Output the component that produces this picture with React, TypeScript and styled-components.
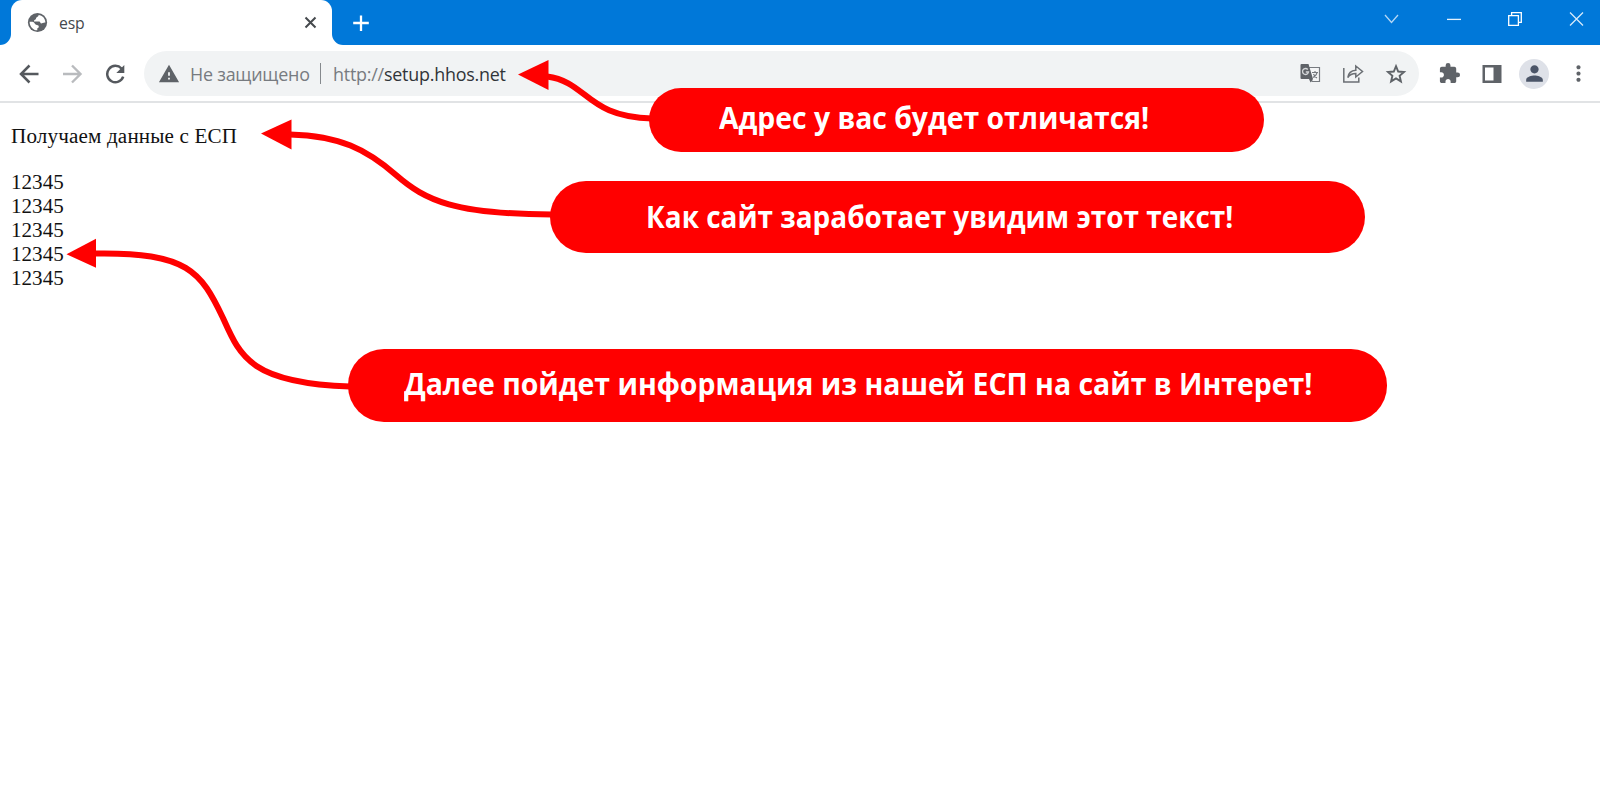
import React from 'react';
import styled, { createGlobalStyle } from 'styled-components';
import { MdExtension, MdMoreVert, MdPerson, MdWarning } from 'react-icons/md';

const GlobalStyle = createGlobalStyle`
  * { box-sizing: border-box; }
  body { margin: 0; background: #fff; overflow: hidden; }
  svg { display: block; flex: none; }
`;

const Window = styled.div`
  position: relative;
  width: 1600px;
  height: 800px;
  display: flex;
  flex-direction: column;
  background: #fff;
  font-family: 'Open Sans', 'Noto Sans', sans-serif;
`;

const TabStrip = styled.header`
  display: flex;
  height: 45px;
  background: #0078d9;
  color: #fff;
`;

const StripEdge = styled.div`
  width: 11px;
  background: #fff;
  &::before {
    content: '';
    display: block;
    height: 45px;
    background: #0078d9;
    border-bottom-right-radius: 11px;
  }
`;

const Tab = styled.div`
  display: flex;
  align-items: center;
  width: 321px;
  padding: 0 15px 0 16px;
  background: #fff;
  border-radius: 11px 11px 0 0;
  color: #45494d;
`;

const TabTitle = styled.span`
  flex: 1;
  margin-left: 11px;
  font-size: 15.8px;
  line-height: 20px;
  letter-spacing: -0.2px;
`;

const StripRest = styled.div`
  flex: 1;
  display: flex;
  background: #fff;
`;

const StripFill = styled.div`
  flex: 1;
  display: flex;
  justify-content: space-between;
  padding: 0 16px 0 21px;
  background: #0078d9;
  border-bottom-left-radius: 11px;
`;

const NewTab = styled.div`
  padding-top: 15px;
`;

const WindowButtons = styled.div`
  display: flex;
  gap: 47px;
  padding-top: 12px;
`;

const Toolbar = styled.nav`
  display: flex;
  align-items: center;
  height: 58px;
  padding: 1px 9px 0 19px;
  border-bottom: 2px solid #e1e3e5;
  color: #5f6368;
`;

const NavButtons = styled.div`
  display: flex;
  gap: 22px;
  width: 125px;
`;

const AddressBar = styled.div`
  display: flex;
  align-items: center;
  width: 1275px;
  height: 45px;
  padding: 0 12px 0 14px;
  border-radius: 23px;
  background: #f1f3f4;
  font-size: 17.9px;
  letter-spacing: -0.22px;
`;

const Security = styled.span<{ $width: number }>`
  width: ${(p) => p.$width}px;
  margin-left: 10px;
  color: #777b80;
  white-space: nowrap;
`;

const Divider = styled.i`
  width: 1px;
  height: 21px;
  margin-right: 12px;
  background: #85898d;
`;

const Url = styled.span`
  flex: 1;
  color: #303438;
`;

const Scheme = styled.span`
  color: #777b80;
`;

const AddressActions = styled.div`
  display: flex;
  align-items: center;
  gap: 21px;
`;

const ToolbarActions = styled.div`
  display: flex;
  align-items: center;
  flex: 1;
  justify-content: flex-end;
  gap: 17px;
`;

const Avatar = styled.div`
  display: flex;
  align-items: center;
  justify-content: center;
  width: 30px;
  height: 30px;
  border-radius: 50%;
  background: #dee1e8;
  color: #4b5568;
`;

const Extensions = styled.div`
  margin-right: 4px;
`;

const Page = styled.main`
  padding: 21px 11px;
  font-family: 'Liberation Serif', serif;
  font-size: 21.1px;
  line-height: 24px;
  color: #111;
`;

const Heading = styled.p`
  margin: 0 0 22px;
  letter-spacing: 0.16px;
`;

const Reading = styled.div``;

const Arrows = styled.svg`
  position: absolute;
  inset: 0;
  pointer-events: none;
`;

const Callout = styled.div<{ $x: number; $y: number; $w: number; $h: number; $indent: number }>`
  position: absolute;
  left: ${(p) => p.$x}px;
  top: ${(p) => p.$y}px;
  width: ${(p) => p.$w}px;
  height: ${(p) => p.$h}px;
  padding-left: ${(p) => p.$indent}px;
  border-radius: 36px;
  background: #f00;
  color: #fff;
`;

const CalloutText = styled.span<{ $drop: number; $stretch: number }>`
  display: inline-block;
  margin-top: ${(p) => p.$drop}px;
  font: 700 30px/40px 'Open Sans', sans-serif;
  white-space: nowrap;
  transform: scaleX(${(p) => p.$stretch});
  transform-origin: left;
`;

const readings = ['12345', '12345', '12345', '12345', '12345'];

const callouts = [
  { x: 649, y: 88, w: 615, h: 64, indent: 70, drop: 10, stretch: 0.944, text: 'Адрес у вас будет отличатся!' },
  { x: 550, y: 181, w: 815, h: 72, indent: 96, drop: 16, stretch: 0.931, text: 'Как сайт заработает увидим этот текст!' },
  { x: 348, y: 349, w: 1039, h: 73, indent: 56, drop: 15, stretch: 0.947, text: 'Далее пойдет информация из нашей ЕСП на сайт в Интерет!' },
];

const Globe = () => (
  <svg width="21" height="21" viewBox="0 0 21 21">
    <circle cx="10.5" cy="10.5" r="9.6" fill="#5f6368" />
    <path
      d="M11.5 3C12 4.5 9 5 9 6.600S7 7.500 7 9.500H11.500C13 9.500 13.300 10 13.600 11.300C15 11.800 16 10.300 18.400 10.500C18.300 6.500 15.500 3.300 11.500 3z"
      fill="#fff"
    />
    <path
      d="M2.600 9.700C2.600 14.500 6 18.200 10.300 18.300V16.300C11.800 16 12 15 11.600 13.800C10.600 12.800 9.300 13.300 8.300 12.300C7.600 11.200 7 9.700 5.300 9.700z"
      fill="#fff"
    />
  </svg>
);

const App = () => (
  <>
    <GlobalStyle />
    <Window>
      <TabStrip>
        <StripEdge />
        <Tab>
          <Globe />
          <TabTitle>esp</TabTitle>
          <svg width="13" height="13" viewBox="0 0 13 13" stroke="#45494d" strokeWidth="2">
            <path d="M1.500 1.500l10 10M11.500 1.500l-10 10" />
          </svg>
        </Tab>
        <StripRest>
          <StripFill>
            <NewTab>
              <svg width="17" height="17" viewBox="0 0 17 17" stroke="#fff" strokeWidth="2.300">
                <path d="M8 .5v15.500M.2 8h15.600" />
              </svg>
            </NewTab>
            <WindowButtons>
              <svg width="16" height="14" viewBox="0 0 16 14" fill="none" stroke="#b4d7f5" strokeWidth="1.300">
                <path d="M1 3l6.500 7.500L14 3" />
              </svg>
              <svg width="14" height="14" viewBox="0 0 14 14" stroke="#e4f1fc" strokeWidth="1.300">
                <path d="M0 7.400h14" />
              </svg>
              <svg width="14" height="14" viewBox="0 0 14 14" fill="none" stroke="#fff" strokeWidth="1.300">
                <path d="M.7 3.600h9.700v9.700H.7zM3.600 3.600V.7h9.700v9.700h-2.900" />
              </svg>
              <svg width="15" height="14" viewBox="0 0 15 14" stroke="#d5e9fa" strokeWidth="1.300">
                <path d="M1 .5l13 13M14 .5l-13 13" />
              </svg>
            </WindowButtons>
          </StripFill>
        </StripRest>
      </TabStrip>

      <Toolbar>
        <NavButtons>
          <svg width="21" height="20" viewBox="0 0 21 20" fill="none" stroke="#55595e" strokeWidth="2.500">
            <path d="M19.500 10H2.500M10.500 1.500L2 10l8.500 8.500" />
          </svg>
          <svg width="21" height="20" viewBox="0 0 21 20" fill="none" stroke="#b9bbbe" strokeWidth="2.400">
            <path d="M1 10h17M10 1.500L18.500 10l-8.500 8.500" />
          </svg>
          <svg width="21" height="20" viewBox="0 0 21 20">
            <path d="M16.500 4.500a8.200 8.200 0 1 0 1.700 8.200" fill="none" stroke="#55595e" strokeWidth="2.500" />
            <path d="M19.300 1v8h-8z" fill="#55595e" />
          </svg>
        </NavButtons>
        <AddressBar>
          <MdWarning size={22} />
          <Security $width={130}>Не защищено</Security>
          <Divider />
          <Url>
            <Scheme>http://</Scheme>setup.hhos.net
          </Url>
          <AddressActions>
            <svg width="21" height="21" viewBox="0 0 21 21">
              <path d="M8 4.500h11.500v14H12z" fill="#f5f6f7" stroke="#777b80" strokeWidth="1.200" />
              <path d="M1.500 1h7L13 16H1.500A1 1 0 0 1 .5 15V2a1 1 0 0 1 1-1z" fill="#5f6368" />
              <path d="M9 16h4l-2.500 3.500z" fill="#5f6368" />
              <path d="M7.800 6.500A3 3 0 1 0 8.500 9H5.800" fill="none" stroke="#d6d8da" strokeWidth="1.300" />
              <path d="M12 9.500h6M15 8v1.500M17 9.500c-.5 2.500-2 4-4 5M13.500 11c.8 1.800 2 3 3.500 4" fill="none" stroke="#777b80" strokeWidth="1.200" />
            </svg>
            <svg width="22" height="21" viewBox="0 0 22 21" fill="none" stroke="#6b6f74" strokeWidth="1.500">
              <path d="M1.800 5v14h15v-4.500M5.800 14.500c.6-4.800 3.500-7 8-7.300V3l6.700 5.500-6.700 5.500v-3.500c-3.800 0-6.100 1.100-8 4z" />
            </svg>
            <svg width="22" height="22" viewBox="0 0 22 22" fill="none" stroke="#5f6368" strokeWidth="1.900">
              <path d="M11 3.200l2.200 5.300 5.800.5-4.400 3.800 1.300 5.600-4.900-3-4.900 3 1.300-5.600L3 9l5.800-.5z" />
            </svg>
          </AddressActions>
        </AddressBar>
        <ToolbarActions>
          <Extensions>
            <MdExtension size={23} />
          </Extensions>
          <svg width="20" height="20" viewBox="0 0 20 20">
            <path d="M.5 1h19v18H.5zM3 3.500v13h8.500v-13z" fill="#5f6368" fillRule="evenodd" />
          </svg>
          <Avatar>
            <MdPerson size={25} />
          </Avatar>
          <MdMoreVert size={25} />
        </ToolbarActions>
      </Toolbar>

      <Page>
        <Heading>Получаем данные с ЕСП</Heading>
        {readings.map((value, i) => (
          <Reading key={i}>{value}</Reading>
        ))}
      </Page>

      <Arrows width="1600" height="800" viewBox="0 0 1600 800">
        <g fill="none" stroke="#f00" strokeWidth="6">
          <path d="M547 76.500C588 82 586 117 652 118.500" />
          <path d="M290 134.500C340 136 366 149 396 175S455 214 552 214.500" />
          <path d="M95 253.500C188 252 201 272 223 318C240 356 250 383 350 386.500" />
        </g>
        <g fill="#f00">
          <path d="M518 74.500l30.500-14.500v30z" />
          <path d="M261 133.500l30.500-14v30z" />
          <path d="M66.500 254.300l29.500-15.500v29z" />
        </g>
      </Arrows>

      {callouts.map((c) => (
        <Callout key={c.text} $x={c.x} $y={c.y} $w={c.w} $h={c.h} $indent={c.indent}>
          <CalloutText $drop={c.drop} $stretch={c.stretch}>
            {c.text}
          </CalloutText>
        </Callout>
      ))}
    </Window>
  </>
);

export default App;
